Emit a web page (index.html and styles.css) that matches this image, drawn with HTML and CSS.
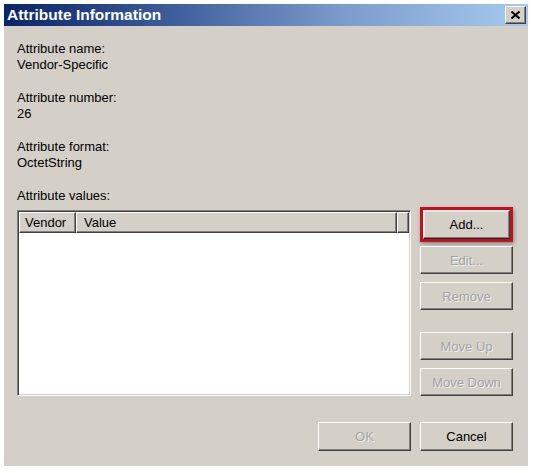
FILE: index.html
```html
<!DOCTYPE html>
<html>
<head>
<meta charset="utf-8">
<title>Attribute Information</title>
<link rel="stylesheet" href="styles.css">
</head>
<body>
<div class="dialog">
  <div class="titlebar">
    <span class="title">Attribute Information</span>
    <span class="close"><svg width="9" height="8" viewBox="0 0 9 8"><path d="M0.5 0.5 L8.5 7.5 M8.5 0.5 L0.5 7.5" stroke="#000" stroke-width="2" fill="none"/></svg></span>
  </div>
  <div class="body">
    <div class="main">
      <div class="left">
        <div class="field"><div>Attribute name:</div><div>Vendor-Specific</div></div>
        <div class="field"><div>Attribute number:</div><div>26</div></div>
        <div class="field"><div>Attribute format:</div><div>OctetString</div></div>
        <div class="values-label">Attribute values:</div>
        <div class="list">
          <div class="header">
            <div class="hcell vendor">Vendor</div>
            <div class="hcell value">Value</div>
            <div class="hcell filler"></div>
          </div>
          <div class="rows"></div>
        </div>
      </div>
      <div class="right">
        <div class="highlight"><div class="btn btn-default">Add...</div></div>
        <div class="btn disabled edit">Edit...</div>
        <div class="btn disabled remove">Remove</div>
        <div class="btn disabled moveup">Move Up</div>
        <div class="btn disabled movedown">Move Down</div>
      </div>
    </div>
    <div class="footer">
      <div class="btn disabled">OK</div>
      <div class="btn">Cancel</div>
    </div>
  </div>
</div>
</body>
</html>
```
FILE: styles.css
```css
html, body {
  margin: 0;
  padding: 0;
  background: #ffffff;
}
body {
  font-family: "Liberation Sans", Arial, sans-serif;
  font-size: 13px;
  color: #000;
}
.dialog {
  margin: 4px 0 0 4px;
  width: 524px;
  background: #d4d0c8;
}
.titlebar {
  height: 22px;
  background: linear-gradient(to right, #0a246a 0%, #3a5a98 30%, #7c9ccc 65%, #a6caf0 100%);
  display: flex;
  align-items: center;
  justify-content: space-between;
  padding: 0 2px 0 3px;
}
.title {
  color: #fff;
  font-weight: bold;
  font-size: 15.5px;
  letter-spacing: 0;
}
.close {
  width: 19px;
  height: 16px;
  background: #d4d0c8;
  border-top: 1px solid #fff;
  border-left: 1px solid #fff;
  border-right: 1px solid #404040;
  border-bottom: 1px solid #404040;
  box-shadow: inset -1px -1px 0 #808080;
  display: flex;
  align-items: center;
  justify-content: center;
}
.body {
  padding: 15px 15px 15px 13px;
}
.main {
  display: flex;
  align-items: flex-end;
  gap: 9px;
}
.left {
  width: 394px;
}
.field {
  line-height: 16px;
  margin-bottom: 17px;
}
.values-label {
  line-height: 16px;
  margin-bottom: 6px;
}
.list {
  height: 186px;
  box-sizing: border-box;
  background: #fff;
  border-top: 1px solid #808080;
  border-left: 1px solid #808080;
  border-right: 1px solid #fff;
  border-bottom: 1px solid #fff;
  box-shadow: inset 1px 1px 0 #404040, inset -1px -1px 0 #d4d0c8;
  padding: 1px;
}
.header {
  display: flex;
  height: 21px;
}
.hcell {
  box-sizing: border-box;
  background: #d4d0c8;
  border-top: 1px solid #fff;
  border-left: 1px solid #fff;
  border-right: 1px solid #404040;
  border-bottom: 1px solid #404040;
  box-shadow: inset -1px -1px 0 #808080;
  line-height: 19px;
  padding-left: 5px;
}
.vendor { width: 57px; }
.value { width: 321px; padding-left: 7px; }
.filler { flex: 1; }
.right {
  width: 93px;
  display: flex;
  flex-direction: column;
}
.highlight {
  height: 35px;
  box-sizing: border-box;
  border: 3px solid #c4101c;
  box-shadow: 1px 2px 4px rgba(0,0,0,0.35);
  display: flex;
}
.btn {
  box-sizing: border-box;
  width: 93px;
  height: 28px;
  background: #d4d0c8;
  border-top: 1px solid #fff;
  border-left: 1px solid #fff;
  border-right: 1px solid #404040;
  border-bottom: 1px solid #404040;
  box-shadow: inset -1px -1px 0 #808080;
  display: flex;
  align-items: center;
  justify-content: center;
  font-size: 13px;
}
.btn-default {
  width: auto;
  flex: 1;
  height: auto;
  border-color: #f4f2ee #404040 #202020 #f4f2ee;
  box-shadow: inset -1px -1px 0 #808080, inset 1px 1px 0 #e8e6e0;
}
.disabled {
  color: #a3a2a6;
  text-shadow: 1px 1px 0 rgba(255,255,255,0.7);
}
.edit { margin-top: 4px; }
.remove { margin-top: 8px; }
.moveup { margin-top: 22px; }
.movedown { margin-top: 8px; }
.footer {
  display: flex;
  justify-content: flex-end;
  gap: 9px;
  margin-top: 26px;
}
.footer .btn {
  height: 29px;
}
```
